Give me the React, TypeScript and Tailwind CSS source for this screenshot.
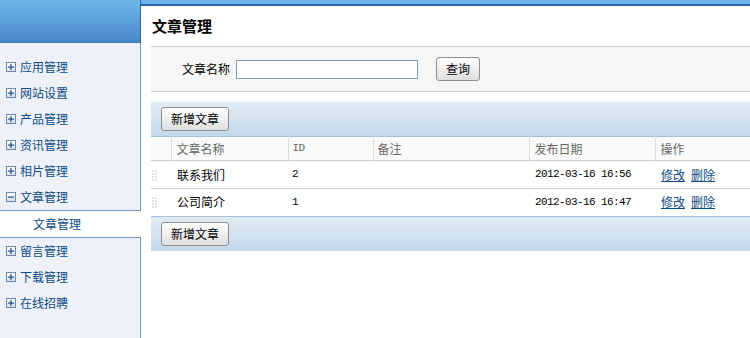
import React from "react";

const menuTop = ["应用管理", "网站设置", "产品管理", "资讯管理", "相片管理"];
const menuBottom = ["留言管理", "下载管理", "在线招聘"];

const rows = [
  { name: "联系我们", id: "2", date: "2012-03-16 16:56" },
  { name: "公司简介", id: "1", date: "2012-03-16 16:47" },
];

const cjk = "font-['SimSun','Noto_Sans_CJK_SC',sans-serif]";

function ToggleIcon({ open }: { open?: boolean }) {
  return (
    <svg width="10" height="10" viewBox="0 0 10 10" className="shrink-0">
      <defs>
        <linearGradient id="tg" x1="0" y1="0" x2="0" y2="1">
          <stop offset="0" stopColor="#ffffff" />
          <stop offset="1" stopColor="#d5dfea" />
        </linearGradient>
      </defs>
      <rect x="0.5" y="0.5" width="9" height="9" fill="url(#tg)" stroke="#6f87a6" />
      <rect x="2" y="4.5" width="6" height="1.2" fill="#1f4f86" />
      {!open && <rect x="4.4" y="2" width="1.2" height="6" fill="#1f4f86" />}
    </svg>
  );
}

function MenuItem({ label, open }: { label: string; open?: boolean }) {
  return (
    <div className="h-[26px] flex items-center gap-[4px] pl-[6px] text-[12px] text-[#0d4a86]">
      <ToggleIcon open={open} />
      <span>{label}</span>
    </div>
  );
}

function Grip() {
  return (
    <svg width="6" height="12" viewBox="0 0 6 12">
      {[0, 3, 6, 9].map((y) =>
        [0, 3].map((x) => (
          <rect key={`${x}-${y}`} x={x} y={y} width="2" height="2" fill="#e2e2e2" />
        ))
      )}
    </svg>
  );
}

function Btn({ children, className = "" }: { children: React.ReactNode; className?: string }) {
  return (
    <button
      className={`h-[24px] rounded-[3px] border border-[#8f8f8f] bg-gradient-to-b from-white to-[#dedede] text-[12px] text-black leading-none ${className}`}
    >
      {children}
    </button>
  );
}

function Toolbar() {
  return (
    <div className="h-[34px] flex items-center pl-[10px] bg-gradient-to-b from-[#e1ebf3] to-[#c4d9ec]">
      <Btn className="w-[68px]">新增文章</Btn>
    </div>
  );
}

export default function App() {
  return (
    <div
      className={`w-[750px] h-[338px] overflow-hidden flex bg-[linear-gradient(to_bottom,#6db5e9_0px,#4a8bcb_40px,#3f7fc0_43px,#eef2f8_43px)] ${cjk}`}
    >
      {/* Sidebar */}
      <div className="w-[141px] shrink-0 flex flex-col">
        <div className="h-[43px] border-r border-[#2e67a5] shrink-0" />
        <div className="bg-[#eef2f8] border-r border-b border-[#6f94bd] pt-[11px]">
          {menuTop.map((m) => (
            <MenuItem key={m} label={m} />
          ))}
          <MenuItem label="文章管理" open />
        </div>
        <div className="h-[26px] bg-white flex items-center pl-[33px] text-[12px] text-[#0d4a86]">
          文章管理
        </div>
        <div className="flex-1 bg-[#eef2f8] border-r border-t border-[#6f94bd]">
          {menuBottom.map((m) => (
            <MenuItem key={m} label={m} />
          ))}
        </div>
      </div>

      {/* Main */}
      <div className="flex-1 mt-[4px] bg-white border-t-2 border-[#2e67a5] pl-[10px]">
        <div className="h-[41px] flex items-center pl-px border-b border-[#cccccc] text-[15px] font-bold text-black">
          文章管理
        </div>
        <div className="h-[45px] flex items-center bg-[#f6f6f6] border-b border-[#cccccc] text-[12px] text-black">
          <span className="ml-[31px]">文章名称</span>
          <input className="ml-[6px] w-[182px] h-[19px] border border-[#7f9db9] bg-white outline-none" />
          <Btn className="ml-[18px] w-[44px]">查询</Btn>
        </div>

        <div className="mt-[10px]">
          <Toolbar />
          <table className="w-full border-collapse text-[12px] border-t border-[#a5c0da]">
            <thead>
              <tr className="h-[24px] bg-[#fafafa] text-[#666666] text-left border-b border-[#cccccc]">
                <th className="w-[20px] font-normal p-0"></th>
                <th className="w-[117px] font-normal pl-[5px] border-l border-[#dddddd]">文章名称</th>
                <th className="w-[85px] font-normal pl-[4px] border-l border-[#dddddd] font-['Liberation_Mono',monospace] text-[11px] tracking-[-0.6px]">ID</th>
                <th className="w-[156px] font-normal pl-[4px] border-l border-[#dddddd]">备注</th>
                <th className="w-[126px] font-normal pl-[5px] border-l border-[#dddddd]">发布日期</th>
                <th className="font-normal pl-[5px] border-l border-[#dddddd]">操作</th>
              </tr>
            </thead>
            <tbody>
              {rows.map((r) => (
                <tr key={r.id} className="h-[28px] last:h-[27px] border-b border-[#cccccc] last:border-b-0 text-black">
                  <td className="pl-[1px] pt-[2px] align-middle">
                    <Grip />
                  </td>
                  <td className="pl-[6px]">{r.name}</td>
                  <td className="pl-[4px] font-['Liberation_Mono',monospace] text-[11px] tracking-[-0.6px]">{r.id}</td>
                  <td></td>
                  <td className="pl-[6px] font-['Liberation_Mono',monospace] text-[11px] tracking-[-0.6px]">{r.date}</td>
                  <td className="pl-[6px]">
                    <a className="text-[#0d4a86] underline">修改</a>
                    <a className="ml-[6px] text-[#0d4a86] underline">删除</a>
                  </td>
                </tr>
              ))}
            </tbody>
          </table>
          <div className="border-t border-[#a5c0da]">
            <Toolbar />
          </div>
        </div>
      </div>
    </div>
  );
}
